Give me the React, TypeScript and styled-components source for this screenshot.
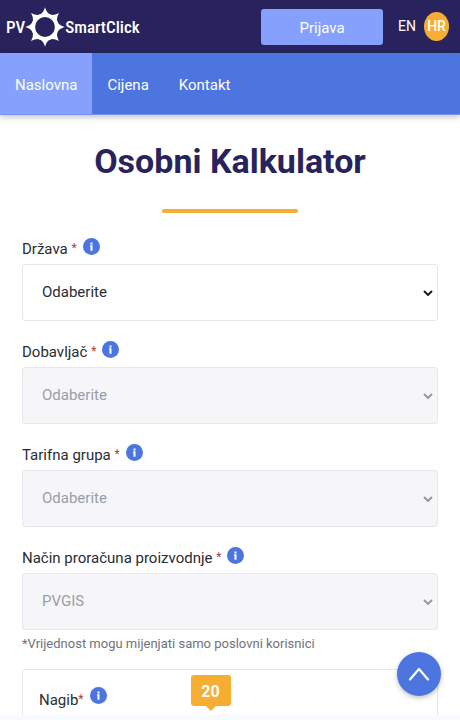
import React from "react";
import styled, { createGlobalStyle } from "styled-components";

const color = {
  navy: "#28235c",
  blue: "#4d75df",
  sky: "#85a1fd",
  amber: "#f6ae32",
  line: "#e7e8eb",
  text: "#2a2d33",
};

const GlobalStyle = createGlobalStyle`
  *, *::before, *::after { box-sizing: border-box; }
  body {
    margin: 0;
    background: #fff;
    color: ${color.text};
    font-family: Roboto, "Noto Sans", sans-serif;
    font-size: 15px;
  }
  button, select { font: inherit; }
`;

const Page = styled.div`
  display: flex;
  flex-direction: column;
  height: 100vh;
  overflow: hidden;
`;

const Header = styled.header`
  display: flex;
  align-items: center;
  flex: none;
  height: 53px;
  padding: 0 11px 0 6px;
  background: ${color.navy};
  color: #fff;
`;

const Brand = styled.a`
  display: flex;
  align-items: center;
  margin-right: auto;
  color: #fff;
  font-family: "Roboto Condensed", Roboto, sans-serif;
  font-size: 17px;
  font-weight: 500;
  line-height: 40px;
  text-decoration: none;
`;

const LoginButton = styled.button`
  width: 122px;
  height: 36px;
  padding: 2px 0 0;
  border: 0;
  border-radius: 3px;
  background: ${color.sky};
  color: #fff;
  cursor: pointer;
`;

const Languages = styled.div`
  display: flex;
  align-items: center;
  gap: 8px;
  margin-left: 15px;
`;

const Language = styled.a<{ $active?: boolean }>`
  display: block;
  width: ${(p) => (p.$active ? "25px" : "auto")};
  border-radius: 50%;
  background: ${(p) => (p.$active ? color.amber : "transparent")};
  color: #fff;
  font-size: 14px;
  font-weight: ${(p) => (p.$active ? 500 : 400)};
  line-height: 29px;
  text-align: center;
  text-decoration: none;
`;

const Nav = styled.nav`
  position: relative;
  display: flex;
  flex: none;
  height: 62px;
  border-bottom: 1px solid #7593ec;
  background: ${color.blue};
  box-shadow: 0 2px 6px rgba(0, 0, 0, 0.25);
`;

const NavLink = styled.a<{ $active?: boolean }>`
  padding: 0 15px;
  background: ${(p) => (p.$active ? color.sky : "transparent")};
  color: #fff;
  line-height: 64px;
  text-decoration: none;
`;

const Main = styled.main`
  flex: 1;
  min-height: 0;
  padding: 0 22px;
  overflow: hidden;
`;

const Title = styled.h1`
  margin: 26px 0 0;
  color: ${color.navy};
  font-size: 34px;
  font-weight: 700;
  line-height: 40px;
  text-align: center;
`;

const Accent = styled.hr`
  width: 136px;
  height: 4px;
  margin: 28px auto 23px;
  border: 0;
  border-radius: 2px;
  background: ${color.amber};
`;

const Fields = styled.div`
  display: grid;
  gap: 18px;
`;

const LabelRow = styled.div`
  display: flex;
  align-items: flex-start;
  gap: 6px;
  height: 28px;
`;

const Label = styled.label`
  line-height: 26px;
`;

const Required = styled.span`
  color: #a8433b;
  font-size: 12px;
  line-height: 1;
  vertical-align: 2px;
`;

const InfoButton = styled.button`
  display: block;
  width: 17px;
  height: 17px;
  margin-top: 2px;
  padding: 0;
  border: 0;
  background: none;
  cursor: pointer;
`;

const SelectBox = styled.div`
  display: grid;
  align-items: center;
`;

const Select = styled.select`
  grid-area: 1 / 1;
  appearance: none;
  width: 100%;
  height: 57px;
  padding: 0 19px 2px;
  border: 1px solid ${color.line};
  border-radius: 3px;
  background: #fff;
  color: ${color.text};

  &:disabled {
    background: #f6f6f9;
    color: #9a9ea6;
    opacity: 1;
  }
`;

const Chevron = styled.svg<{ $muted?: boolean }>`
  grid-area: 1 / 1;
  justify-self: end;
  width: 10px;
  height: 6px;
  margin-right: 5px;
  color: ${(p) => (p.$muted ? "#92969f" : "#16181d")};
  pointer-events: none;
`;

const Note = styled.p`
  margin: 4px 0 0;
  color: #6f737a;
  font-size: 13px;
  line-height: 20px;
`;

const Card = styled.section`
  display: flex;
  gap: 84px;
  height: 120px;
  margin-top: 15px;
  padding: 5px 16px;
  border: 1px solid ${color.line};
  border-radius: 3px;
`;

const CardLabel = styled(LabelRow)`
  margin-top: 10px;
`;

const CardLabelText = styled.span`
  line-height: 30px;
`;

const Bubble = styled.output`
  position: relative;
  width: 40px;
  height: 31px;
  border-radius: 3px;
  background: ${color.amber};
  color: #fff;
  font-size: 16px;
  font-weight: 700;
  line-height: 33px;
  text-align: center;

  &::after {
    content: "";
    position: absolute;
    top: 100%;
    left: 15px;
    border: 5px solid transparent;
    border-top-color: ${color.amber};
    border-bottom: 0;
  }
`;

const BottomStrip = styled.footer`
  flex: none;
  height: 5px;
  background: #f7faff;
`;

const ScrollTop = styled.button`
  position: fixed;
  right: 19px;
  bottom: 24px;
  display: grid;
  place-items: center;
  width: 44px;
  height: 44px;
  padding: 0;
  border: 0;
  border-radius: 50%;
  background: ${color.blue};
  box-shadow: 0 2px 5px rgba(0, 0, 0, 0.25);
  cursor: pointer;
`;

const rays = Array.from({ length: 8 }, (_, i) => i * 45);

function SunLogo() {
  return (
    <svg width="40" height="40" viewBox="-20 -20 40 40" aria-hidden="true">
      <circle r="11.8" fill="none" stroke="#fff" strokeWidth="3.8" />
      {rays.map((angle) => (
        <path
          key={angle}
          d="M-6 -11.6 Q-1.6 -14 0 -19.8 Q1.6 -14 6 -11.6 Z"
          fill="#fff"
          transform={`rotate(${angle})`}
        />
      ))}
    </svg>
  );
}

function Info({ about }: { about: string }) {
  return (
    <InfoButton type="button" aria-label={`Informacije: ${about}`}>
      <svg width="17" height="17" viewBox="0 0 17 17" display="block" aria-hidden="true">
        <circle cx="8.5" cy="8.5" r="8.5" fill={color.blue} />
        <path d="M7.5 4.4h2v2h-2zM7 7.3h2.5v5.4h-2V8.5H7z" fill="#fff" />
      </svg>
    </InfoButton>
  );
}

type FieldProps = { id: string; label: string; value: string; disabled?: boolean };

function Field({ id, label, value, disabled }: FieldProps) {
  return (
    <div>
      <LabelRow>
        <Label htmlFor={id}>
          {label} <Required>*</Required>
        </Label>
        <Info about={label} />
      </LabelRow>
      <SelectBox>
        <Select id={id} disabled={disabled} required>
          <option>{value}</option>
        </Select>
        <Chevron viewBox="0 0 10 6" $muted={disabled} aria-hidden="true">
          <path d="M1 1l4 4 4-4" fill="none" stroke="currentColor" strokeWidth="1.9" />
        </Chevron>
      </SelectBox>
    </div>
  );
}

const fields: FieldProps[] = [
  { id: "drzava", label: "Država", value: "Odaberite" },
  { id: "dobavljac", label: "Dobavljač", value: "Odaberite", disabled: true },
  { id: "tarifa", label: "Tarifna grupa", value: "Odaberite", disabled: true },
  { id: "nacin", label: "Način proračuna proizvodnje", value: "PVGIS", disabled: true },
];

export default function App() {
  return (
    <Page>
      <GlobalStyle />
      <Header>
        <Brand href="#">
          <span>PV</span>
          <SunLogo />
          <span>SmartClick</span>
        </Brand>
        <LoginButton type="button">Prijava</LoginButton>
        <Languages>
          <Language href="#en">EN</Language>
          <Language href="#hr" $active>HR</Language>
        </Languages>
      </Header>
      <Nav>
        <NavLink href="#naslovna" $active>Naslovna</NavLink>
        <NavLink href="#cijena">Cijena</NavLink>
        <NavLink href="#kontakt">Kontakt</NavLink>
      </Nav>
      <Main>
        <Title>Osobni Kalkulator</Title>
        <Accent />
        <Fields>
          {fields.map((field) => (
            <Field key={field.id} {...field} />
          ))}
        </Fields>
        <Note>*Vrijednost mogu mijenjati samo poslovni korisnici</Note>
        <Card>
          <CardLabel>
            <CardLabelText>
              Nagib<Required>*</Required>
            </CardLabelText>
            <Info about="Nagib" />
          </CardLabel>
          <Bubble>20</Bubble>
        </Card>
      </Main>
      <BottomStrip />
      <ScrollTop type="button" aria-label="Povratak na vrh">
        <svg width="22" height="16" viewBox="0 0 22 16" aria-hidden="true">
          <path
            d="M2 13.5L11 3l9 10.5"
            fill="none"
            stroke="#fff"
            strokeWidth="2.2"
            strokeLinecap="round"
            strokeLinejoin="round"
          />
        </svg>
      </ScrollTop>
    </Page>
  );
}
